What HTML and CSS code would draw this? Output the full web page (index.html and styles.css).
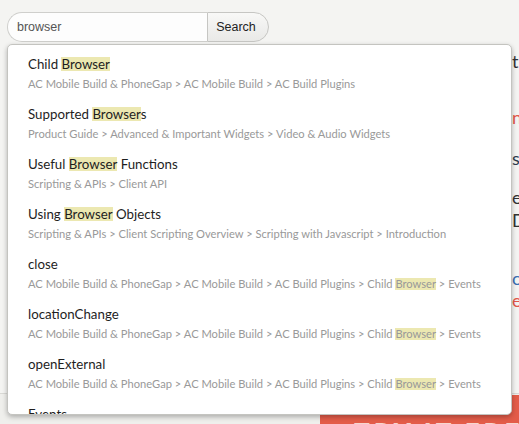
FILE: index.html
```html
<!DOCTYPE html>
<html>
<head>
<meta charset="utf-8">
<link rel="stylesheet" href="styles.css">
</head>
<body>
<div class="page">
  <header class="header">
    <form class="search">
      <input class="search-input" type="text" value="browser">
      <button class="search-btn" type="button">Search</button>
    </form>
  </header>
  <main class="main">
    <div class="side">
      <div class="s s1">the</div>
      <div class="s s2 red">new</div>
      <div class="s s3 navy">sign</div>
      <div class="s s4">ease</div>
      <div class="s s5">Do</div>
      <div class="s s6 blue">code</div>
      <div class="s s7 red">ever</div>
    </div>
  </main>
  <footer class="footer">
    <div class="cta">TRY IT FREE</div>
  </footer>

  <div class="dropdown">
    <ul class="results">
      <li class="item">
        <div class="title">Child <span class="hl">Browser</span></div>
        <div class="crumb">AC Mobile Build &amp; PhoneGap &gt; AC Mobile Build &gt; AC Build Plugins</div>
      </li>
      <li class="item">
        <div class="title">Supported <span class="hl">Browser</span>s</div>
        <div class="crumb">Product Guide &gt; Advanced &amp; Important Widgets &gt; Video &amp; Audio Widgets</div>
      </li>
      <li class="item">
        <div class="title">Useful <span class="hl">Browser</span> Functions</div>
        <div class="crumb">Scripting &amp; APIs &gt; Client API</div>
      </li>
      <li class="item">
        <div class="title">Using <span class="hl">Browser</span> Objects</div>
        <div class="crumb">Scripting &amp; APIs &gt; Client Scripting Overview &gt; Scripting with Javascript &gt; Introduction</div>
      </li>
      <li class="item">
        <div class="title">close</div>
        <div class="crumb">AC Mobile Build &amp; PhoneGap &gt; AC Mobile Build &gt; AC Build Plugins &gt; Child <span class="hl hl-sm">Browser</span> &gt; Events</div>
      </li>
      <li class="item">
        <div class="title">locationChange</div>
        <div class="crumb">AC Mobile Build &amp; PhoneGap &gt; AC Mobile Build &gt; AC Build Plugins &gt; Child <span class="hl hl-sm">Browser</span> &gt; Events</div>
      </li>
      <li class="item">
        <div class="title">openExternal</div>
        <div class="crumb">AC Mobile Build &amp; PhoneGap &gt; AC Mobile Build &gt; AC Build Plugins &gt; Child <span class="hl hl-sm">Browser</span> &gt; Events</div>
      </li>
      <li class="item">
        <div class="title">Events</div>
        <div class="crumb">AC Mobile Build &amp; PhoneGap &gt; AC Mobile Build &gt; AC Build Plugins &gt; Child <span class="hl hl-sm">Browser</span></div>
      </li>
    </ul>
  </div>
</div>
</body>
</html>
```

FILE: styles.css
```css
* { box-sizing: border-box; }
html, body { margin: 0; padding: 0; }
body {
  background: #f4f4f2;
  font-family: "Liberation Sans", Arial, sans-serif;
  overflow: hidden;
  width: 519px;
  height: 424px;
}
.page {
  position: relative;
  width: 519px;
  height: 424px;
  display: flex;
  flex-direction: column;
}
.header {
  flex: 0 0 42px;
  padding: 12px 0 0 7px;
}
.search {
  display: flex;
  margin: 0;
}
.search-input {
  width: 200px;
  height: 30px;
  margin: 0;
  border: 1px solid #cfcfcc;
  border-right: none;
  border-radius: 15px 0 0 15px;
  background: #fdfdfd;
  padding: 0 0 0 9px;
  font-family: "Liberation Sans", Arial, sans-serif;
  font-size: 12.5px;
  color: #555;
  outline: none;
}
.search-btn {
  width: 62px;
  height: 30px;
  margin: 0;
  border: 1px solid #c6c6c3;
  border-radius: 0 15px 15px 0;
  background: linear-gradient(#f8f8f7, #e9e9e7);
  padding: 0 4px 0 0;
  font-family: "Liberation Sans", Arial, sans-serif;
  font-size: 12.5px;
  color: #222;
}
.main {
  flex: 0 0 351px;
  overflow: hidden;
}
.side {
  padding-left: 512px;
  font-family: Lato, sans-serif;
  font-size: 18px;
  color: #333;
  white-space: nowrap;
}
.s { height: 20px; line-height: 20px; }
.s1 { margin-top: 9px; }
.s2 { margin-top: 36px; }
.s3 { margin-top: 21px; }
.s4 { margin-top: 19px; }
.s5 { margin-top: 3px; }
.s6 { margin-top: 38px; }
.s7 { margin-top: 2px; }
.red { color: #e4574a; }
.navy { color: #2d3b4c; }
.blue { color: #3a6fb3; }
.footer {
  flex: 1 1 auto;
  min-height: 0;
  overflow: hidden;
  border-top: 1px solid #d9d9d5;
  background: #efefec;
  padding-top: 1px;
}
.cta {
  margin-left: 320px;
  height: 60px;
  background: #e35c49;
  color: #f6d6cf;
  font-family: Lato, sans-serif;
  font-weight: 900;
  font-size: 26px;
  letter-spacing: 4px;
  padding: 24px 0 0 34px;
  line-height: 26px;
  white-space: nowrap;
  overflow: hidden;
}
.dropdown {
  position: absolute;
  left: 7px;
  top: 44px;
  width: 505px;
  height: 371px;
  background: #fff;
  border: 1px solid #c4c4c0;
  border-radius: 5px;
  box-shadow: 0 2px 5px rgba(0, 0, 0, 0.28);
  overflow: hidden;
}
.results {
  list-style: none;
  margin: 0;
  padding: 0;
}
.item {
  height: 50px;
  padding: 9px 20px 0 20px;
  white-space: nowrap;
}
.title {
  font-family: Lato, sans-serif;
  font-size: 13.3px;
  line-height: 20px;
  color: #1e1e1e;
}
.crumb {
  font-family: Lato, sans-serif;
  font-size: 11.15px;
  line-height: 20px;
  color: #999;
}
.hl {
  display: inline-block;
  background: #ece8b1;
  line-height: 14px;
}
.hl-sm {
  line-height: 12px;
}
```
